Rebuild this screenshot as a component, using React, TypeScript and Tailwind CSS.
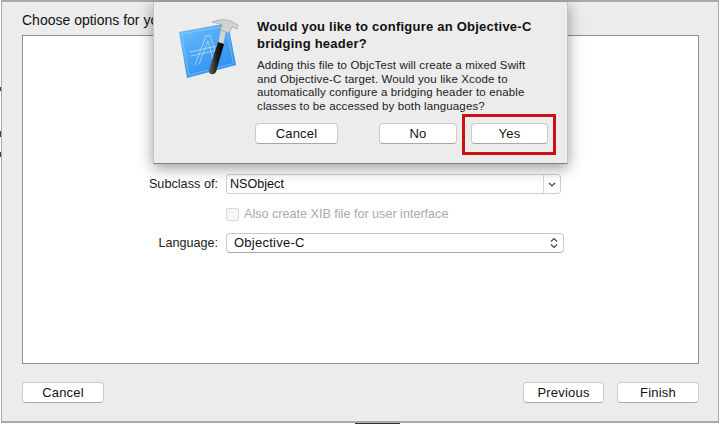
const font = "font-['Liberation_Sans',Arial,sans-serif]";

function MacButton({ label, className }: { label: string; className: string }) {
  return (
    <button className={`flex h-[21px] items-center justify-center rounded-[4px] border border-[#cbcbcb] border-b-[#a8a8a8] bg-white text-[13px] tracking-[0.2px] text-[#111] ${className}`}>
      {label}
    </button>
  );
}

function XcodeIcon() {
  return (
    <svg viewBox="0 0 75 70" className="h-[70px] w-[75px] shrink-0">
      <defs>
        <linearGradient id="blue" x1="0" y1="0" x2="0.6" y2="1">
          <stop offset="0" stopColor="#6fc0fa" />
          <stop offset="1" stopColor="#2f8ff0" />
        </linearGradient>
        <linearGradient id="handle" x1="0" y1="0" x2="1" y2="0">
          <stop offset="0" stopColor="#666" />
          <stop offset="0.5" stopColor="#222" />
          <stop offset="1" stopColor="#000" />
        </linearGradient>
      </defs>
      <path d="M9 17 L58 8 L66 50 L17 63 Z" fill="url(#blue)" />
      <path d="M11.5 19 L56 11 L63.5 48.5 L19 60 Z" fill="none" stroke="#b5e0fc" strokeWidth="0.6" opacity="0.7" />
      <g fill="none" stroke="#cfeafd" strokeWidth="0.7" opacity="0.9">
        <path d="M25 50 L36 21 L40 20 L47 43" />
        <path d="M29 49 L38 26 L43 44" />
        <path d="M20 37 L47 31" />
        <path d="M21 41 L48 35" />
      </g>
      <path d="M48 30 L51 14 L56 15 L53 31 Z" fill="#d4d4d4" />
      <path d="M48 27 L54 29 L46 57 Q44 60 41 59 Q38 58 39 55 Z" fill="url(#handle)" />
      <path d="M42 7 Q52 3 61 6 L68 10 L67 14 L62 12 L59 18 L50 15 L52 10 Q48 8 42 7 Z" fill="#d2d2d2" stroke="#8a8a8a" strokeWidth="0.5" />
    </svg>
  );
}

export default function App() {
  return (
    <div className={`relative h-[424px] w-[720px] overflow-hidden bg-white ${font}`}>
      <div className="ml-[1px] h-[423px] w-[718px] border-y-2 border-x border-y-[#a9a9a9] border-x-[#a9a9a9] bg-[#ececec]">
        <div className="flex h-[419px] flex-col pr-[19px] pl-[20px]">
          <div className="flex h-[33px] items-center pt-[3px] text-[14px] text-[#111]">Choose options for your new file:</div>
          <div className="h-[329px] border border-[#8f8f8f] bg-white pt-[138px] pl-[117px]">
            <div className="flex h-[20px] items-center">
              <span className="w-[78px] pt-[1px] text-right text-[12.7px] text-[#222]">Subclass of:</span>
              <div className="ml-[8px] flex h-[20px] w-[335px] items-center justify-between rounded-[3px] border border-[#cdcdcd] bg-white pl-[3px] text-[12.6px] text-[#111]">
                <span className="pt-[1px]">NSObject</span>
                <span className="flex h-full w-[17px] items-center justify-center border-l border-[#d6d6d6]">
                  <svg viewBox="0 0 8 5" className="h-[5px] w-[8px]"><path d="M1 1 L4 4 L7 1" fill="none" stroke="#444" strokeWidth="1.2" /></svg>
                </span>
              </div>
            </div>
            <div className="mt-[11px] flex h-[18px] items-center pl-[86px]">
              <span className="h-[13px] w-[13px] rounded-[2px] border border-[#d8d8d8] bg-[#f7f7f7]" />
              <span className="ml-[5px] text-[12.6px] text-[#aaa]">Also create XIB file for user interface</span>
            </div>
            <div className="mt-[10px] flex h-[20px] items-center">
              <span className="w-[78px] text-right text-[12.6px] text-[#222]">Language:</span>
              <div className="ml-[8px] flex h-[20px] w-[338px] items-center justify-between rounded-[4px] border border-[#c8c8c8] border-b-[#a8a8a8] bg-white pr-[5px] pl-[7px] text-[13px] tracking-[0.25px] text-[#111]">
                Objective-C
                <svg viewBox="0 0 8 12" className="h-[12px] w-[8px]"><path d="M1 4.5 L4 1.5 L7 4.5 M1 7.5 L4 10.5 L7 7.5" fill="none" stroke="#444" strokeWidth="1.2" /></svg>
              </div>
            </div>
          </div>
          <div className="mt-[18px] flex items-center justify-between">
            <MacButton label="Cancel" className="w-[82px]" />
            <div className="flex gap-[13px]">
              <MacButton label="Previous" className="w-[81px]" />
              <MacButton label="Finish" className="w-[82px]" />
            </div>
          </div>
        </div>
      </div>

      {/* sheet over the wizard */}
      <div className="absolute top-[2px] left-[153px] flex h-[162px] w-[415px] border-x border-b border-x-[#c4c4c4] border-b-[#7f7f7f] bg-[#ececec] pt-[13px] pl-[16px] shadow-[0_4px_14px_rgba(0,0,0,0.4)]">
        <XcodeIcon />
        <div className="mt-[3px] ml-[12px] w-[300px]">
          <div className="text-[13px] leading-[17px] font-bold tracking-[0.23px] text-[#111]">
            Would you like to configure an Objective-C<br />bridging header?
          </div>
          <div className="mt-[7px] text-[11.5px] leading-[13.6px] tracking-[0.13px] text-[#222]">
            Adding this file to ObjcTest will create a mixed Swift<br />
            and Objective-C target. Would you like Xcode to<br />
            automatically configure a bridging header to enable<br />
            classes to be accessed by both languages?
          </div>
          <div className="absolute top-[121px] left-[101px] flex">
            <MacButton label="Cancel" className="w-[83px]" />
            <MacButton label="No" className="ml-[41px] w-[78px]" />
            <MacButton label="Yes" className="ml-[14px] w-[77px]" />
          </div>
        </div>
      </div>

      <div className="pointer-events-none absolute top-[114px] left-[462px] h-[41px] w-[94px] border-[3px] border-[#cc1016]" />

      {/* cut-off bits of the window behind */}
      <span className="absolute top-[87px] left-0 h-[4px] w-[1px] bg-[#444]" />
      <span className="absolute top-[131px] left-0 h-[6px] w-[1px] bg-[#444]" />
      <span className="absolute top-[152px] left-0 h-[5px] w-[1px] bg-[#444]" />
      <span className="absolute bottom-0 left-[355px] h-[1px] w-[45px] bg-[#333]" />
    </div>
  );
}
